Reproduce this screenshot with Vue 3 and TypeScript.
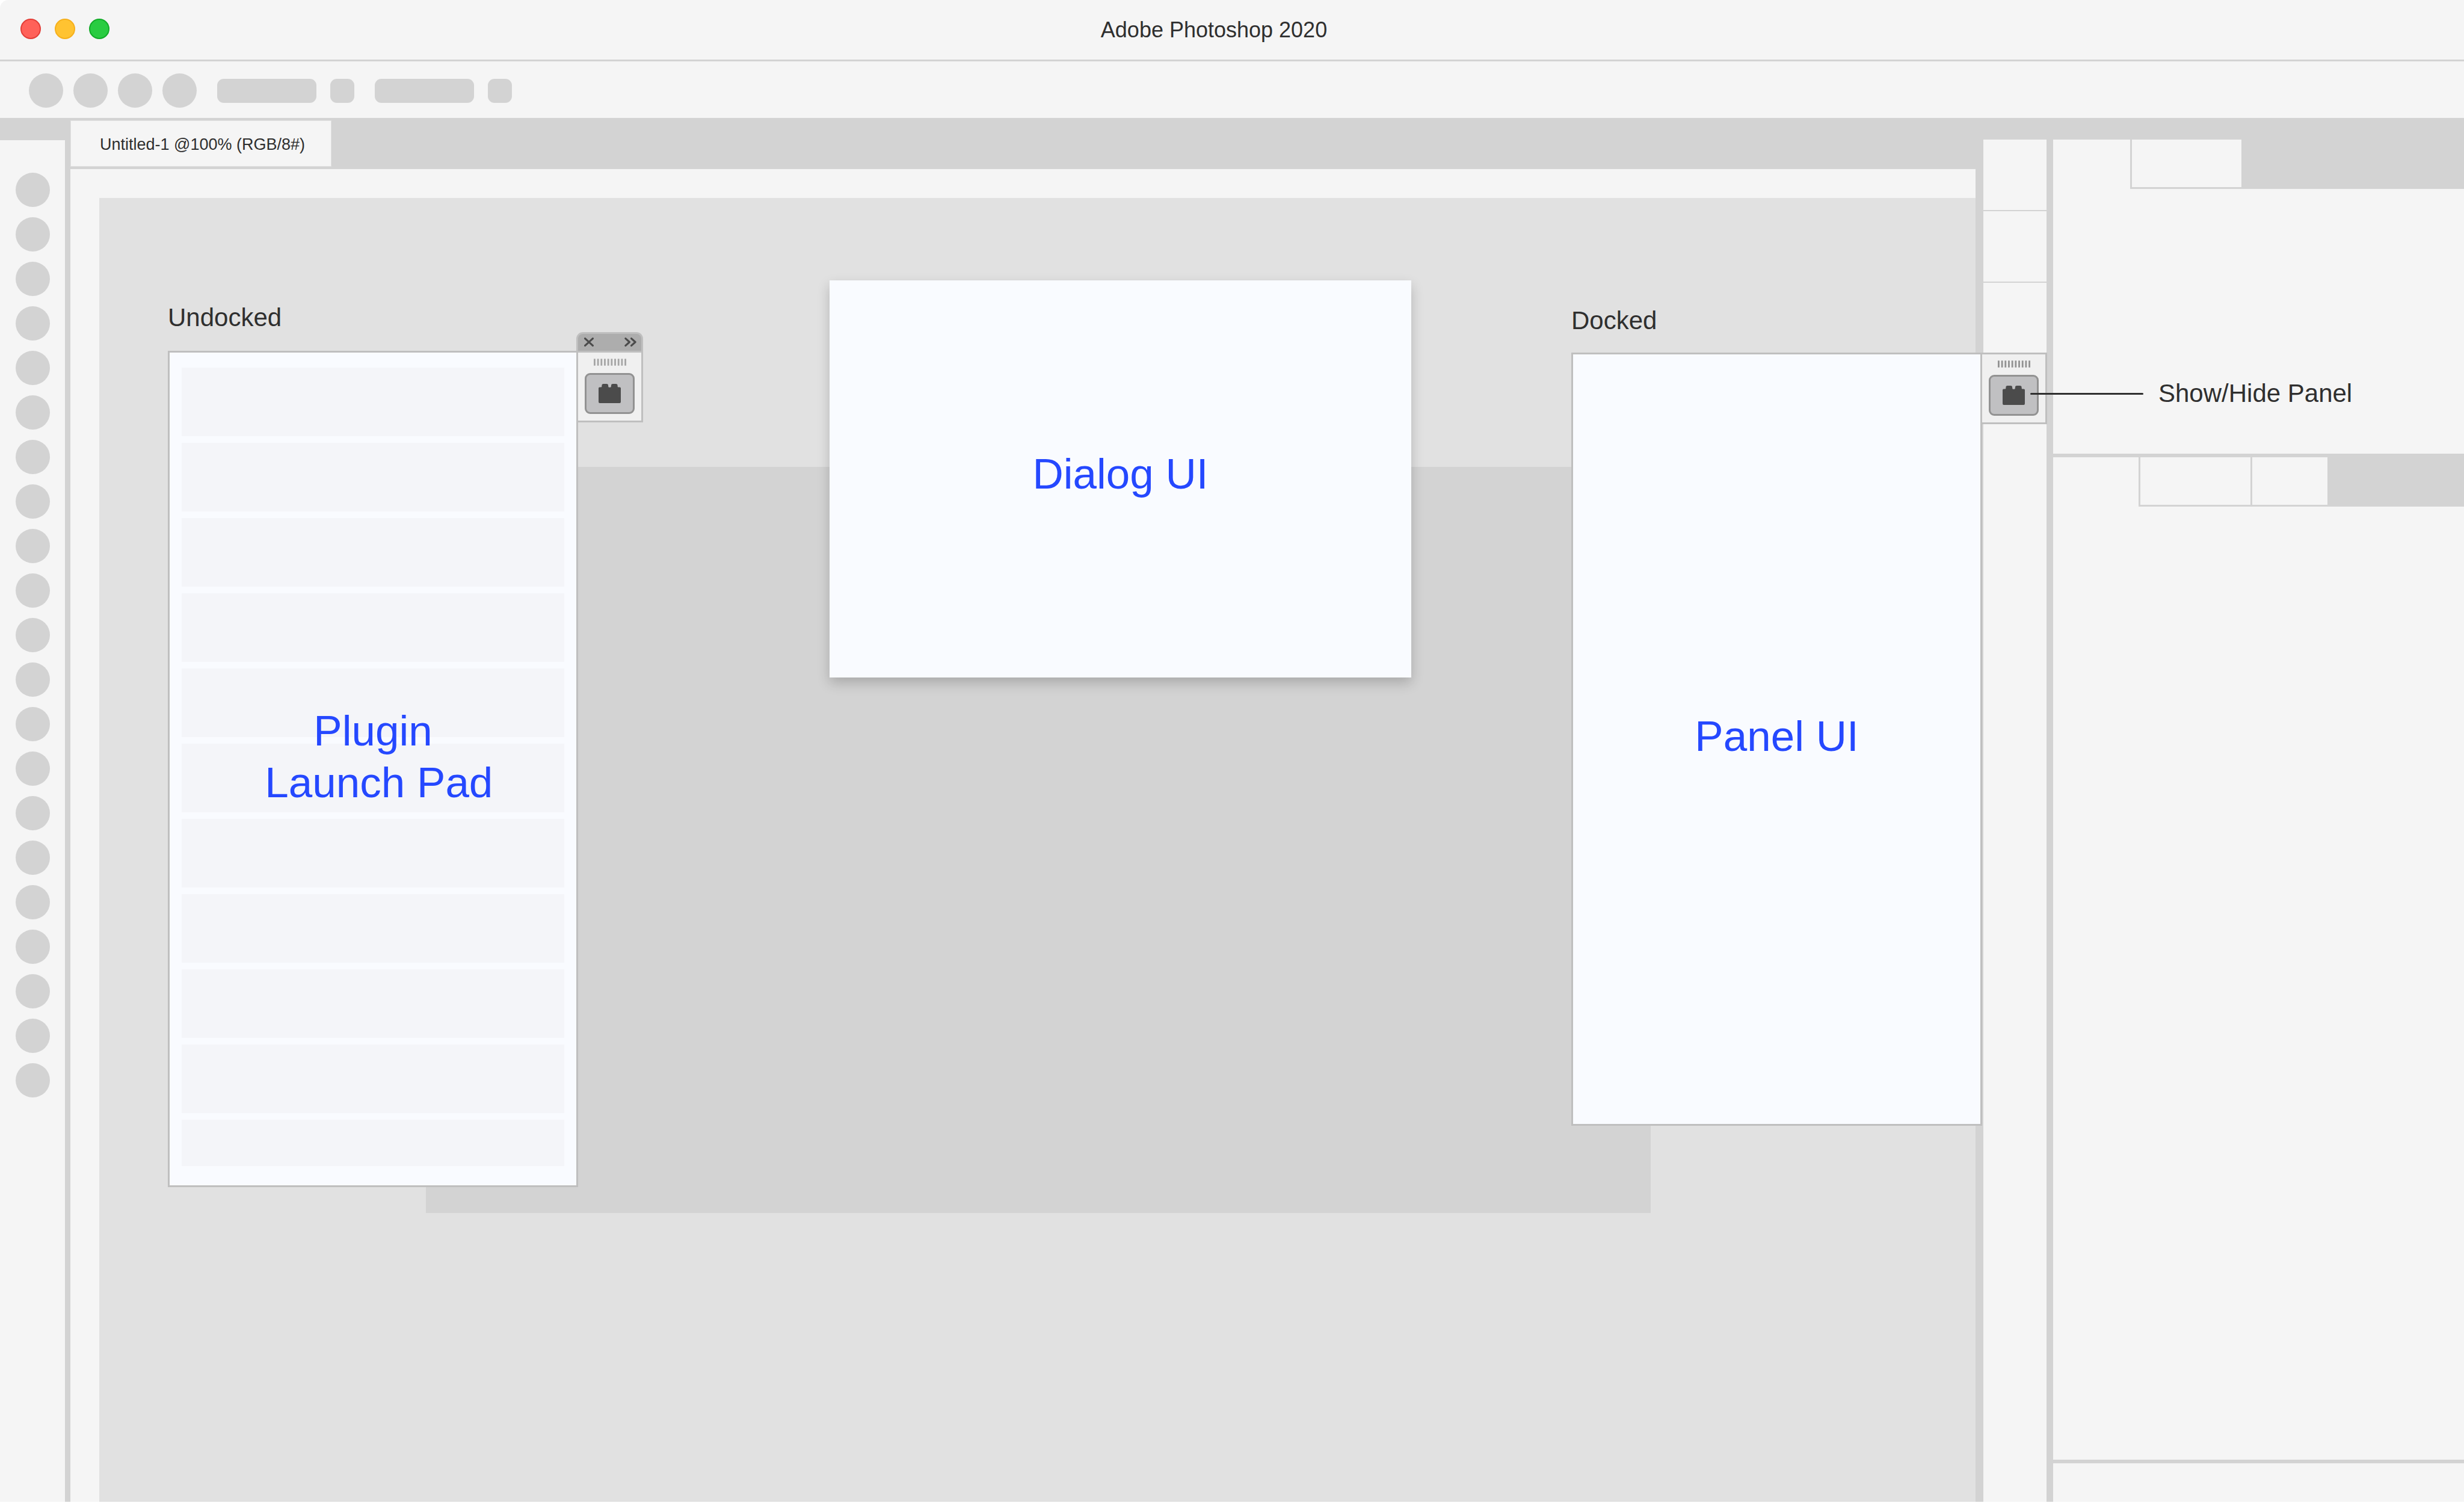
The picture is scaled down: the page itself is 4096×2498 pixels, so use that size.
<script setup lang="ts">
import { ref } from 'vue'

interface TabGroup {
  id: string
  widths: number[]
}

const documentTitle = 'Untitled-1 @100% (RGB/8#)'
const toolbarDots = 4
const toolCount = 21
const launchPadRows = 11
const stripCells = 3
const gripBars = 10

const tabGroups: TabGroup[] = [
  { id: 'upper', widths: [128, 182] },
  { id: 'lower', widths: [142, 183, 125] },
]

const panelOpen = ref(true)
const launchPadOpen = ref(true)
</script>

<template>
  <div class="window">
    <header class="titlebar">
      <div class="lights">
        <button class="light close" type="button" aria-label="Close"></button>
        <button class="light minimize" type="button" aria-label="Minimize"></button>
        <button class="light zoom" type="button" aria-label="Zoom"></button>
      </div>
      <h1 class="title">Adobe Photoshop 2020</h1>
    </header>

    <div class="toolbar">
      <div class="dots">
        <span v-for="n in toolbarDots" :key="n" class="dot"></span>
      </div>
      <div v-for="n in 2" :key="n" class="field">
        <span class="bar"></span>
        <span class="chip"></span>
      </div>
    </div>

    <main class="workspace">
      <aside class="tools">
        <span v-for="n in toolCount" :key="n" class="dot"></span>
      </aside>

      <section class="document">
        <div class="document-tabs">
          <button class="document-tab" type="button">{{ documentTitle }}</button>
        </div>
        <div class="rulers">
          <div class="canvas">
            <div class="artboard"></div>

            <section class="undocked">
              <h2 class="label">Undocked</h2>
              <div class="undocked-row">
                <div v-show="launchPadOpen" class="panel launch-pad">
                  <div v-for="n in launchPadRows" :key="n" class="pad-row"></div>
                  <p class="caption pad-caption">Plugin<br />{{ ' Launch Pad' }}</p>
                </div>
                <div class="launcher floating">
                  <div class="launcher-head">
                    <button class="icon-button" type="button" aria-label="Close panel">
                      <svg width="16" height="15" viewBox="0 0 51 48">
                        <path d="M5 5L46 43M46 5L5 43" />
                      </svg>
                    </button>
                    <button class="icon-button" type="button" aria-label="Collapse panel">
                      <svg width="20" height="15" viewBox="0 0 62 48">
                        <path d="M5 5L26 24L5 43M36 5L57 24L36 43" />
                      </svg>
                    </button>
                  </div>
                  <div class="launcher-body">
                    <svg class="grip" width="54" height="12" viewBox="0 0 57 12">
                      <rect v-for="n in gripBars" :key="n" :x="(n - 1) * 6" y="0" width="3" height="12" />
                    </svg>
                    <button class="plugin-button" type="button" aria-label="Plugins" @click="launchPadOpen = !launchPadOpen">
                      <svg width="37" height="32" viewBox="0 0 117 101">
                        <path d="M6 17H14Q17 17 17 12V9Q17 0 26 0H42Q51 0 51 9V12Q51 18 55 18H62Q66 18 66 12V9Q66 0 75 0H91Q100 0 100 9V12Q100 17 103 17H111Q117 17 117 23V94Q117 101 111 101H6Q0 101 0 94V23Q0 17 6 17Z" />
                      </svg>
                    </button>
                  </div>
                </div>
              </div>
            </section>

            <section class="dialog">
              <p class="caption">Dialog UI</p>
            </section>
          </div>
        </div>
      </section>

      <aside class="strip">
        <div v-for="n in stripCells" :key="n" class="strip-cell"></div>
        <div class="strip-rest"></div>
      </aside>

      <aside class="side">
        <section v-for="group in tabGroups" :key="group.id" class="group" :class="group.id">
          <div class="group-tabs">
            <span v-for="(width, i) in group.widths" :key="i" class="group-tab" :style="{ width: width + 'px' }"></span>
          </div>
        </section>
        <section class="group footer"></section>
      </aside>

      <section class="docked">
        <h2 class="label">Docked</h2>
        <div class="docked-row">
          <div v-show="panelOpen" class="panel docked-panel">
            <p class="caption">Panel UI</p>
          </div>
          <div class="launcher">
            <div class="launcher-body">
              <svg class="grip dark" width="54" height="12" viewBox="0 0 57 12">
                <rect v-for="n in gripBars" :key="n" :x="(n - 1) * 6" y="0" width="3" height="12" />
              </svg>
              <button class="plugin-button" type="button" aria-labelledby="toggle-label" @click="panelOpen = !panelOpen">
                <svg width="37" height="32" viewBox="0 0 117 101">
                  <path d="M6 17H14Q17 17 17 12V9Q17 0 26 0H42Q51 0 51 9V12Q51 18 55 18H62Q66 18 66 12V9Q66 0 75 0H91Q100 0 100 9V12Q100 17 103 17H111Q117 17 117 23V94Q117 101 111 101H6Q0 101 0 94V23Q0 17 6 17Z" />
                </svg>
              </button>
            </div>
            <div class="callout">
              <span class="callout-line"></span>
              <span id="toggle-label" class="label">Show/Hide Panel</span>
            </div>
          </div>
        </div>
      </section>
    </main>
  </div>
</template>

<style>
body {
  margin: 0;
  background: #ffffff;
}
</style>

<style scoped>
.window {
  box-sizing: border-box;
  display: flex;
  flex-direction: column;
  min-height: 100vh;
  padding-bottom: 2px;
  overflow: hidden;
  font-family: 'Liberation Sans', Arial, sans-serif;
  color: #2f2f2f;
}

.window * {
  box-sizing: border-box;
}

button {
  padding: 0;
  border: 0;
  background: none;
  font: inherit;
  color: inherit;
}

h1,
h2,
p {
  margin: 0;
  font-weight: 400;
}

svg {
  display: block;
}

.titlebar {
  display: grid;
  grid-template-columns: 200px 1fr 260px;
  align-items: center;
  height: 102px;
  border-bottom: 3px solid #d3d3d3;
  border-top-left-radius: 14px;
  background: #f5f5f5;
}

.lights {
  display: flex;
  gap: 23px;
  padding: 0 0 3px 34px;
}

.light {
  width: 34px;
  height: 34px;
  border: 2px solid #e33e38;
  border-radius: 50%;
  background: #ff6159;
}

.light.minimize {
  border-color: #f6b01c;
  background: #ffc331;
}

.light.zoom {
  border-color: #12ac28;
  background: #29cc41;
}

.title {
  text-align: center;
  font-size: 36px;
  line-height: 48px;
}

.toolbar {
  display: flex;
  align-items: center;
  gap: 34px;
  height: 94px;
  padding: 3px 48px 0;
  background: #f5f5f5;
}

.dots {
  display: flex;
  gap: 17px;
}

.dot {
  flex: none;
  width: 57px;
  height: 57px;
  border-radius: 50%;
  background: #d3d3d3;
}

.field {
  display: flex;
  gap: 23px;
}

.bar,
.chip {
  width: 165px;
  height: 40px;
  border-radius: 11px;
  background: #d3d3d3;
}

.chip {
  width: 40px;
}

.workspace {
  position: relative;
  flex: 1;
  display: flex;
  background: #d3d3d3;
}

.tools {
  display: flex;
  flex-direction: column;
  align-items: center;
  gap: 17px;
  width: 108px;
  margin: 37px 9px 0 0;
  padding-top: 54px;
  background: #f5f5f5;
}

.document {
  flex: 1;
  display: flex;
  flex-direction: column;
}

.document-tabs {
  display: flex;
  padding: 4px 0;
}

.document-tab {
  height: 77px;
  padding: 4px 43px 0 48px;
  border: 1px solid #e1e1e1;
  background: #f5f5f5;
  font-size: 27px;
}

.rulers {
  flex: 1;
  display: flex;
  padding: 48px 0 0 48px;
  background: #f5f5f5;
}

.canvas {
  position: relative;
  flex: 1;
  background: #e1e1e1;
}

.artboard {
  position: absolute;
  left: 543px;
  top: 447px;
  width: 2036px;
  height: 1240px;
  background: #d3d3d3;
}

.label {
  font-size: 42px;
  line-height: 48px;
  white-space: nowrap;
}

.undocked {
  position: absolute;
  left: 114px;
  top: 175px;
}

.undocked-row,
.docked-row {
  display: flex;
  align-items: flex-start;
}

.panel {
  position: relative;
  border: 3px solid #bfbfbf;
  background: #f9fbff;
}

.launch-pad {
  display: flex;
  flex-direction: column;
  gap: 11px;
  width: 682px;
  margin-top: 31px;
  padding: 25px 20px 32px;
}

.pad-row {
  height: 114px;
  background: #f4f5f9;
}

.pad-row:nth-child(11) {
  height: 77px;
}

.caption {
  font-size: 71px;
  line-height: 86px;
  text-align: center;
  white-space: pre;
  color: #2548ff;
}

.pad-caption {
  position: absolute;
  inset: 0 0 40px;
  display: grid;
  place-content: center;
}

.launcher {
  position: relative;
  width: 111px;
  margin-left: -3px;
}

.launcher-head {
  display: flex;
  align-items: center;
  justify-content: space-between;
  height: 31px;
  padding: 0 8px 2px 10px;
  border: 3px solid #bfbfbf;
  border-bottom: 0;
  border-radius: 11px 11px 0 0;
  background: #adadad;
}

.icon-button path {
  fill: none;
  stroke: #4b4b4b;
  stroke-width: 10;
  stroke-linecap: round;
  stroke-linejoin: round;
}

.launcher-body {
  display: flex;
  flex-direction: column;
  align-items: center;
  gap: 12px;
  height: 119px;
  padding-top: 10px;
  border: 3px solid #bfbfbf;
  background: #f0f0f0;
}

.grip {
  fill: #a6a6a6;
}

.grip.dark {
  fill: #929292;
}

.plugin-button {
  display: grid;
  place-items: center;
  width: 83px;
  height: 68px;
  border: 3px solid #929292;
  border-radius: 9px;
  background: #c0c0c2;
}

.plugin-button path {
  fill: #4b4b4b;
}

.dialog {
  position: absolute;
  left: 1214px;
  top: 137px;
  display: grid;
  place-content: center;
  width: 967px;
  height: 660px;
  padding-bottom: 16px;
  background: #f9fbff;
  box-shadow: 0 9px 20px rgba(0, 0, 0, 0.2);
}

.strip {
  display: flex;
  flex-direction: column;
  gap: 2px;
  width: 105px;
  margin: 36px 11px 0 13px;
}

.strip-cell,
.strip-rest {
  height: 117px;
  background: #f5f5f5;
}

.strip-rest {
  flex: 1;
}

.side {
  display: flex;
  flex-direction: column;
  gap: 6px;
  width: 683px;
  margin-top: 36px;
}

.group {
  background: #f5f5f5;
}

.group.upper {
  height: 522px;
}

.group.lower {
  flex: 1;
}

.group.footer {
  height: 64px;
}

.group-tabs {
  display: flex;
  gap: 3px;
  height: 82px;
  background: #d3d3d3;
}

.group-tab {
  height: 79px;
  background: #f5f5f5;
}

.group-tab:first-child {
  height: 82px;
}

.docked {
  position: absolute;
  right: 693px;
  top: 313px;
}

.docked-row {
  margin-top: 29px;
}

.docked-panel {
  display: grid;
  place-content: center;
  width: 683px;
  height: 1285px;
  padding-bottom: 10px;
}

.callout {
  position: absolute;
  left: 83px;
  top: 44px;
  display: flex;
  align-items: center;
  gap: 25px;
}

.callout-line {
  width: 188px;
  height: 3px;
  border-radius: 2px;
  background: #2f2f2f;
}
</style>
